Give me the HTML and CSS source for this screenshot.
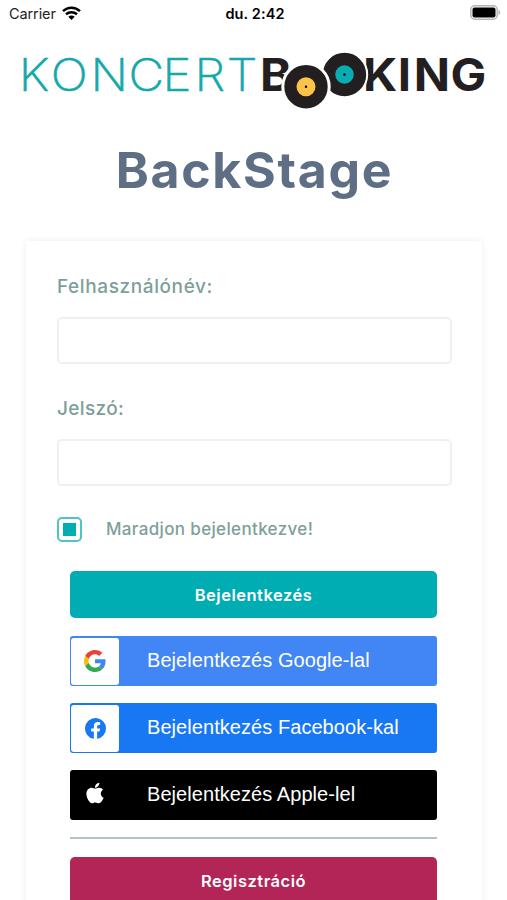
FILE: index.html
```html
<!DOCTYPE html>
<html lang="hu">
<head>
<meta charset="utf-8">
<title>Koncertbooking BackStage</title>
<link rel="stylesheet" href="styles.css">
</head>
<body>
<header class="status">
  <div class="carrier"><span>Carrier</span>
    <svg width="19" height="14" viewBox="0 0 19 14"><path d="M1 5.200C5.800.5 13.200.5 18 5.200M4 8.300c3.200-2.900 7.800-2.900 11 0" fill="none" stroke="#000" stroke-width="2.500"/><path d="M6.300 10.800c1.900-1.600 4.500-1.600 6.400 0L9.500 14z"/></svg>
  </div>
  <div class="time">du. 2:42</div>
  <svg class="battery" width="31" height="16" viewBox="0 0 31 16"><rect x=".8" y=".8" width="26.400" height="13.400" rx="4" fill="#fff" stroke="#b5b5b5" stroke-width="1.500"/><rect x="2.500" y="2.500" width="23" height="10" rx="2"/><path d="M28.500 5c2.400 1 2.400 4 0 5z" fill="#b5b5b5"/></svg>
</header>
<main>
  <svg class="logo" width="507" height="74" viewBox="0 40 507 74">
    <text class="logo-light" transform="scale(1.09 1)" y="91.300" x="17.300 46.500 83 118 149 178.500 208">KONCERT</text>
    <text class="logo-bold" transform="scale(1.06 1)" y="91.500" x="245.300">B</text>
    <text class="logo-bold" transform="scale(1.06 1)" y="91.500" x="342.500 375.300 390.300 425">KING</text>
    <circle cx="344.500" cy="74.500" r="22.700" fill="#231f20" stroke="#fff" stroke-width="2"/>
    <circle cx="344.500" cy="74.500" r="9.300" fill="#08adb3"/><circle cx="344.500" cy="74.500" r="1.200"/>
    <circle cx="306" cy="86.700" r="23.200" fill="#231f20" stroke="#fff" stroke-width="3"/>
    <circle cx="306" cy="86.700" r="9.500" fill="#fdc349"/><circle cx="306" cy="86.700" r="1.200"/>
  </svg>
  <h1>BackStage</h1>
  <form class="card">
    <label class="label user" for="user">Felhasználónév:</label>
    <input class="field" id="user" type="text">
    <label class="label pass" for="pass">Jelszó:</label>
    <input class="field" id="pass" type="password">
    <div class="remember"><span class="check"></span><span>Maradjon bejelentkezve!</span></div>
    <div class="actions">
      <button class="btn login" type="button"><span>Bejelentkezés</span></button>
      <button class="social google" type="button">
        <span class="icon"><svg width="22" height="22" viewBox="0 0 48 48"><path fill="#EA4335" d="M24 9.500c3.540 0 6.710 1.220 9.210 3.600l6.850-6.850C35.900 2.380 30.470 0 24 0 14.620 0 6.510 5.380 2.560 13.220l7.980 6.190C12.430 13.720 17.740 9.500 24 9.500z"/><path fill="#4285F4" d="M46.980 24.550c0-1.570-.15-3.090-.38-4.550H24v9.020h12.940c-.58 2.960-2.260 5.480-4.780 7.180l7.730 6c4.510-4.180 7.090-10.360 7.090-17.650z"/><path fill="#FBBC05" d="M10.530 28.590A14.500 14.500 0 0 1 9.770 24c0-1.600.27-3.140.76-4.590l-7.980-6.190A24 24 0 0 0 0 24c0 3.880.92 7.540 2.560 10.780z"/><path fill="#34A853" d="M24 48c6.480 0 11.930-2.130 15.890-5.810l-7.730-6c-2.150 1.450-4.920 2.300-8.160 2.300-6.260 0-11.570-4.220-13.470-9.910l-7.980 6.190C6.510 42.620 14.620 48 24 48z"/></svg></span>
        <span class="text">Bejelentkezés Google-lal</span>
      </button>
      <button class="social facebook" type="button">
        <span class="icon"><svg width="21" height="21" viewBox="0 0 24 24"><path fill="#1877f2" d="M24 12a12 12 0 1 0-13.880 11.850v-8.380H7.080V12h3.040V9.360c0-3.010 1.790-4.670 4.530-4.670 1.320 0 2.690.24 2.690.24v2.950h-1.510c-1.490 0-1.960.93-1.960 1.880V12h3.330l-.53 3.470h-2.800v8.380A12 12 0 0 0 24 12z"/></svg></span>
        <span class="text">Bejelentkezés Facebook-kal</span>
      </button>
      <button class="social apple" type="button">
        <span class="icon"><svg width="18" height="22" viewBox="0 0 384 480"><path fill="#fff" d="M318.700 252.700c-.2-36.700 16.400-64.400 50-84.800-18.800-26.900-47.200-41.700-84.700-44.600-35.500-2.800-74.300 20.700-88.500 20.700-15 0-49.400-19.700-76.400-19.700C63.300 125.200 4 168.800 4 257.500q0 39.300 14.400 81.200c12.800 36.700 59 126.700 107.200 125.200 25.200-.6 43-17.900 75.800-17.900 31.800 0 48.300 17.900 76.400 17.900 48.600-.7 90.400-82.500 102.600-119.300-65.200-30.700-61.700-90-61.700-91.900zM262.100 88.500c27.300-32.400 24.800-61.900 24-72.500-24.100 1.400-52 16.400-67.900 34.900-17.500 19.800-27.800 44.300-25.600 71.900 26.100 2 49.900-11.400 69.500-34.300z"/></svg></span>
        <span class="text">Bejelentkezés Apple-lel</span>
      </button>
      <hr>
      <button class="btn register" type="button"><span>Regisztráció</span></button>
    </div>
  </form>
</main>
</body>
</html>
```
FILE: styles.css
```css
* { box-sizing: border-box; }
body { margin: 0; height: 900px; overflow: hidden; background: #fff; font-family: Inter, sans-serif; }
.status { display: grid; grid-template-columns: 1fr auto 1fr; align-items: center; height: 28px; padding: 0 6px 0 9px; font-size: 14.500px; color: #222; }
.status > div { margin-top: -2px; }
.carrier { display: flex; align-items: center; gap: 6px; letter-spacing: -.1px; }
.time { font-weight: 600; color: #000; letter-spacing: .1px; }
.battery { justify-self: end; margin-top: -2px; }
.logo { display: block; margin-top: 12px; }
.logo-light { font-size: 45px; font-weight: 200; fill: #12a8ac; stroke: #12a8ac; stroke-width: .6px; }
.logo-bold { font-size: 45px; font-weight: 700; fill: #231f20; }
h1 { margin: 26px 0 0; height: 60px; line-height: 60px; text-align: center; font-size: 50px; font-weight: 700; letter-spacing: 1.700px; text-indent: 2px; color: #5e6e85; }
.card { display: flex; flex-direction: column; width: 456px; height: 720px; margin: 41px 0 0 26px; padding: 32px 31px; background: #fff; box-shadow: 0 0 7px rgba(0, 0, 0, .07); }
.label { height: 26px; line-height: 28px; font-size: 19px; font-weight: 500; letter-spacing: .6px; color: #7e9f99; }
.pass { margin-top: 31px; letter-spacing: .35px; }
.field { width: 395px; height: 47px; margin: 18px 0 0; border: 2px solid #edf1f1; border-radius: 5px; background: #fff; }
.remember { display: flex; align-items: center; gap: 24px; height: 26px; margin-top: 30px; font-size: 17px; font-weight: 500; letter-spacing: .35px; color: #7e9f99; }
.check { display: grid; place-items: center; width: 25px; height: 25px; border: 2px solid #4cc4c8; border-radius: 5px; }
.check::before { content: ""; width: 13px; height: 13px; background: #00adb3; }
.actions { display: flex; flex-direction: column; width: 367px; margin: 29px 0 0 13px; }
button { border: 0; padding: 0; color: #fff; font-family: inherit; }
.btn { height: 47px; border-radius: 5px; font-size: 16.500px; font-weight: 600; letter-spacing: .5px; }
.login { background: #00adb3; }
.register { background: #b22556; }
.social { display: flex; align-items: center; height: 50px; margin-top: 17px; padding: 1px; border-radius: 3px; text-align: left; font: 20px "Liberation Sans", Arial, sans-serif; letter-spacing: .06px; }
.google { margin-top: 18px; background: #4285f4; }
.facebook { background: #1877f2; }
.apple { background: #000; }
.icon { display: grid; place-items: center; width: 48px; height: 47px; border-radius: 3px; background: #fff; }
.apple .icon { background: #000; }
.apple svg { margin-top: -4px; }
.text { margin: -2px 0 0 28px; }
hr { width: 100%; height: 2px; margin: 17px 0 18px; border: 0; background: #b3c5c1; }
```
